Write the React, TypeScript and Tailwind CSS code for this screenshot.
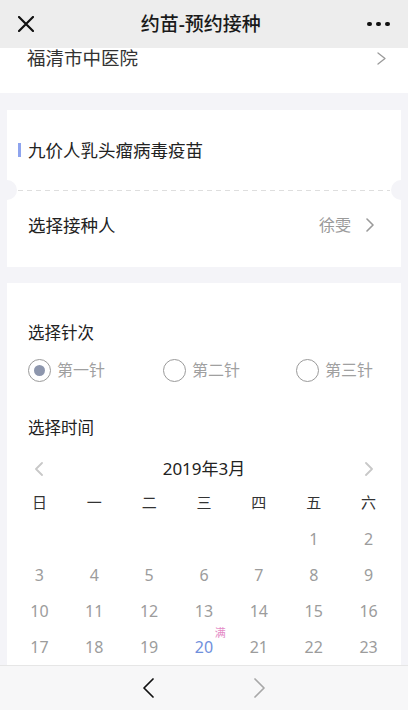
import React from "react";

const FONT = { fontFamily: '"Noto Sans", "Noto Sans CJK SC", sans-serif' };

function Chevron({ dir, className, stroke, w, h, sw }: { dir: "l" | "r"; className?: string; stroke: string; w: number; h: number; sw: number }) {
  const d = dir === "r" ? `M1 1 L${w - 1} ${h / 2} L1 ${h - 1}` : `M${w - 1} 1 L1 ${h / 2} L${w - 1} ${h - 1}`;
  return (
    <svg width={w} height={h} viewBox={`0 0 ${w} ${h}`} className={className}>
      <path d={d} fill="none" stroke={stroke} strokeWidth={sw} strokeLinecap="round" strokeLinejoin="round" />
    </svg>
  );
}

function Radio({ label, checked, width }: { label: string; checked?: boolean; width: string }) {
  return (
    <div className={`flex items-center ${width}`}>
      <div className="w-[23px] h-[23px] rounded-full border-[1.5px] border-[#9a9a9a] flex items-center justify-center">
        {checked && <div className="w-[11px] h-[11px] rounded-full bg-[#8d96ad]" />}
      </div>
      <span className="ml-[6px] text-[16px] text-[#a0a0a0] leading-[24px]">{label}</span>
    </div>
  );
}

export default function App() {
  const weekdays = ["日", "一", "二", "三", "四", "五", "六"];
  const days: (number | null)[] = [null, null, null, null, null, 1, 2];
  for (let i = 3; i <= 23; i++) days.push(i);

  return (
    <div className="w-[408px] h-[710px] overflow-hidden flex flex-col bg-[#f4f4f8]" style={FONT}>
      {/* Header */}
      <div className="h-[48px] shrink-0 bg-[#ededed] flex items-center justify-between px-[18px]">
        <svg width="16" height="16" viewBox="0 0 16 16">
          <path d="M1 1 L15 15 M15 1 L1 15" stroke="#111" strokeWidth="2.2" strokeLinecap="round" />
        </svg>
        <div className="text-[19px] font-medium text-[#1a1a1a] leading-[24px]">约苗-预约接种</div>
        <div className="flex items-center gap-[4.5px]">
          <div className="w-[4.5px] h-[4.5px] rounded-full bg-[#111]" />
          <div className="w-[4.5px] h-[4.5px] rounded-full bg-[#111]" />
          <div className="w-[4.5px] h-[4.5px] rounded-full bg-[#111]" />
        </div>
      </div>

      {/* Main */}
      <div className="flex-1 flex flex-col">
        <div className="h-[45px] shrink-0 bg-white flex items-start justify-between pl-[27px] pr-[22px] pt-[1px]">
          <span className="text-[18.5px] text-[#333] leading-[18px]">福清市中医院</span>
          <Chevron dir="r" w={9} h={13} sw={1.3} stroke="#9a9a9a" className="mt-[3px]" />
        </div>

        {/* Vaccine card */}
        <div className="relative mt-[17px] mx-[7px] bg-white shrink-0">
          <div className="h-[80px] flex items-center pl-[11px]">
            <div className="w-[3px] h-[14px] bg-[#8ea4ee]" />
            <span className="ml-[7px] text-[17.5px] text-[#222] leading-[24px]">九价人乳头瘤病毒疫苗</span>
          </div>
          <svg className="block mx-[11px]" width="372" height="1" viewBox="0 0 372 1">
            <line x1="0" y1="0.5" x2="372" y2="0.5" stroke="#dedede" strokeWidth="1" strokeDasharray="5 4" />
          </svg>
          <div className="absolute left-[-10px] top-[70px] w-[20px] h-[20px] rounded-full bg-[#f4f4f8]" />
          <div className="absolute right-[-10px] top-[70px] w-[20px] h-[20px] rounded-full bg-[#f4f4f8]" />
          <div className="h-[76px] flex items-start justify-between pl-[21px] pr-[27px] pt-[22px]">
            <span className="text-[17.5px] text-[#222] leading-[24px]">选择接种人</span>
            <div className="flex items-center">
              <span className="text-[16px] text-[#9a9a9a] leading-[24px]">徐雯</span>
              <Chevron dir="r" w={8} h={14} sw={1.6} stroke="#9a9a9a" className="ml-[15px]" />
            </div>
          </div>
        </div>

        {/* Schedule card */}
        <div className="mt-[16px] mx-[7px] bg-white shrink-0 pt-[38px]">
          <div className="pl-[21px] h-[24px] text-[16.5px] text-[#222] leading-[24px]">选择针次</div>
          <div className="pl-[21px] mt-[13px] h-[24px] flex items-center">
            <Radio label="第一针" checked width="w-[135px]" />
            <Radio label="第二针" width="w-[133px]" />
            <Radio label="第三针" width="w-[100px]" />
          </div>
          <div className="pl-[21px] mt-[34px] h-[24px] text-[16.5px] text-[#222] leading-[24px]">选择时间</div>

          <div className="px-[5px]">
            <div className="mt-[17px] h-[24px] grid grid-cols-7 items-center">
              <div className="flex justify-center">
                <Chevron dir="l" w={8} h={14} sw={1.8} stroke="#c8c8c8" />
              </div>
              <div className="col-span-5 text-center text-[17px] text-[#222] leading-[24px]">2019年3月</div>
              <div className="flex justify-center">
                <Chevron dir="r" w={8} h={14} sw={1.8} stroke="#c8c8c8" />
              </div>
            </div>
            <div className="mt-[9px] h-[24px] grid grid-cols-7 items-center">
              {weekdays.map((w) => (
                <div key={w} className="text-center text-[15px] text-[#333] leading-[24px]">
                  {w}
                </div>
              ))}
            </div>
            <div className="mt-[7px] grid grid-cols-7">
              {days.map((d, i) => (
                <div key={i} className="h-[36px] flex items-center justify-center">
                  {d !== null &&
                    (d === 20 ? (
                      <span className="relative text-[16px] text-[#7090dc] leading-[20px]">
                        20
                        <span className="absolute left-[20px] top-[-10px] text-[11px] text-[#e48bc6] leading-[12px]">满</span>
                      </span>
                    ) : (
                      <span className="text-[16px] text-[#9c9c9c] leading-[20px]">{d}</span>
                    ))}
                </div>
              ))}
            </div>
          </div>
        </div>
      </div>

      {/* Bottom bar */}
      <div className="h-[45px] shrink-0 bg-[#f7f7f8] border-t border-[#e6e6e6] flex items-center justify-center gap-[100px]">
        <Chevron dir="l" w={11} h={20} sw={1.7} stroke="#111" />
        <Chevron dir="r" w={11} h={20} sw={1.7} stroke="#a8a8a8" />
      </div>
    </div>
  );
}
